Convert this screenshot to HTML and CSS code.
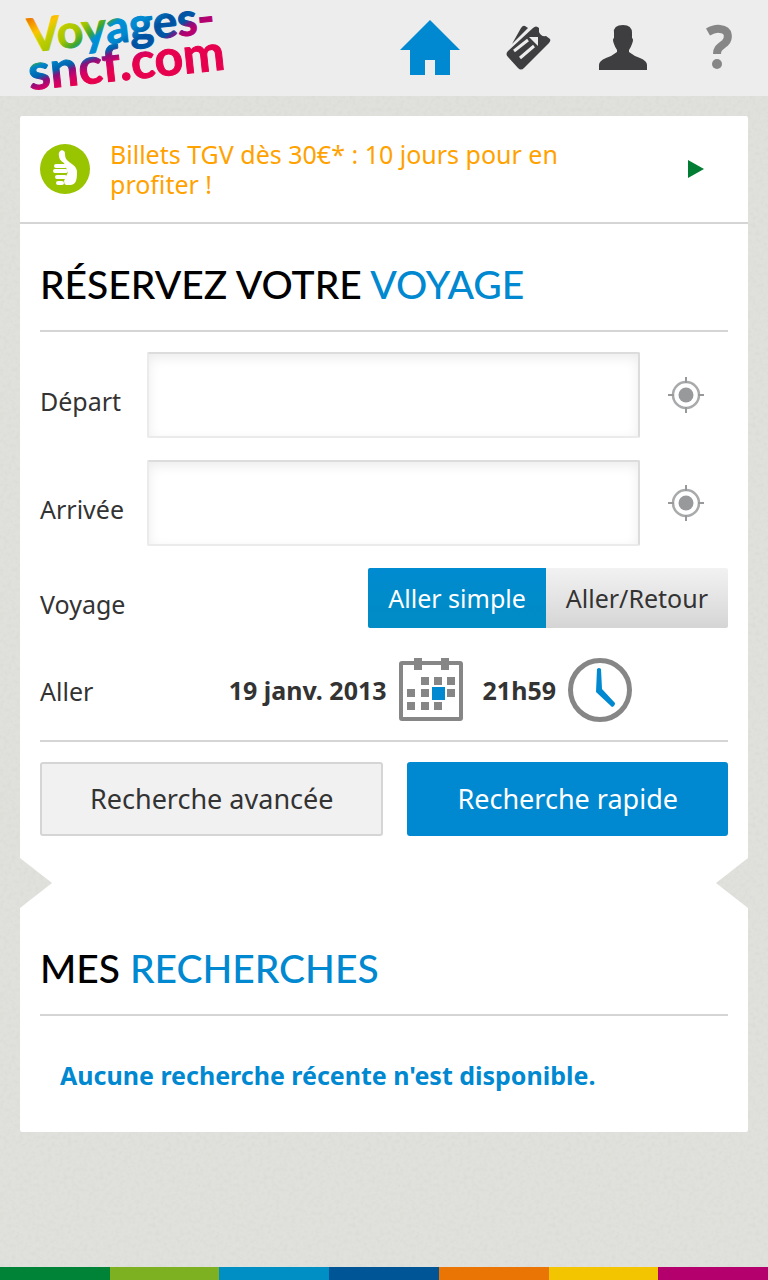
FILE: index.html
```html
<!DOCTYPE html>
<html lang="fr">
<head>
  <meta charset="UTF-8" />
  <meta name="viewport" content="width=device-width, initial-scale=1" />
  <title>Voyages-sncf.com</title>
  <link rel="stylesheet" href="styles.css">
</head>
<body>
  <header class="header">
    <a href="#" class="logo">
      <svg width="230" height="96" viewBox="0 0 230 96" role="img" aria-label="Voyages-sncf.com">
        <defs>
          <linearGradient id="top" gradientUnits="userSpaceOnUse" x1="16" y1="20" x2="79" y2="104" gradientTransform="rotate(6 18 52)">
            <stop offset="0" stop-color="#ee7d00" />
            <stop offset="0.14" stop-color="#fdc400" />
            <stop offset="0.22" stop-color="#c5cf00" />
            <stop offset="0.36" stop-color="#a2c400" />
            <stop offset="0.46" stop-color="#3aa535" />
            <stop offset="0.52" stop-color="#0090d7" />
            <stop offset="0.66" stop-color="#0088cf" />
            <stop offset="0.78" stop-color="#0051a0" />
            <stop offset="0.9" stop-color="#0056a6" />
            <stop offset="0.95" stop-color="#7a1580" />
            <stop offset="1" stop-color="#b5006e" />
          </linearGradient>
          <linearGradient id="bottom" gradientUnits="userSpaceOnUse" x1="16" y1="64" x2="29" y2="98" gradientTransform="rotate(6 18 90)">
            <stop offset="0" stop-color="#3aa935" />
            <stop offset="0.15" stop-color="#0086c8" />
            <stop offset="0.42" stop-color="#0062ae" />
            <stop offset="0.56" stop-color="#8a0f7c" />
            <stop offset="0.75" stop-color="#cf0068" />
            <stop offset="1" stop-color="#e6004e" />
          </linearGradient>
        </defs>
        <g class="logo-text">
          <text x="18" y="52" font-size="46" fill="url(#top)" stroke="url(#top)" transform="rotate(-6 18 52)">Voyages-</text>
          <text x="18" y="90" font-size="50" fill="url(#bottom)" stroke="url(#bottom)" transform="rotate(-6 18 90)">sncf.com</text>
        </g>
      </svg>
    </a>
    <nav class="nav">
      <a href="#" aria-label="Accueil">
        <svg width="60" height="56" viewBox="0 0 60 56"><path d="M30 0L60 30H50V55H35V40H25V55H10V30H0Z" fill="#0088d0" /></svg>
      </a>
      <a href="#" aria-label="Billets">
        <svg width="46" height="46" viewBox="0 0 46 46">
          <path d="M6 19L15 3Q17 0 19 1L22 3Z" fill="#3e3e40" />
          <path d="M2 26L27 3Q30 0 33 3V7Q35 12 40 11L44 14Q45 16 43 18L18 43Q15 46 12 43L2 32Q-1 29 2 26Z" fill="#3e3e40" />
          <path d="M23 12H32V21Z" fill="#ededed" />
          <path d="M8 26L22 15M14 33L28 21" stroke="#ededed" stroke-width="3" />
        </svg>
      </a>
      <a href="#" aria-label="Mon compte">
        <svg width="50" height="46" viewBox="0 0 50 46"><path d="M25 0Q34 0 34 8V13Q36 14 34 19Q33 22 31 25V27Q36 31 42 33Q49 36 49 40V45H1V40Q1 36 8 33Q14 31 19 27V25Q17 22 16 19Q14 14 16 13V8Q15 0 25 0Z" fill="#3e3e40" /></svg>
      </a>
      <a href="#" aria-label="Aide">
        <svg width="26" height="46" viewBox="0 0 26 46">
          <path d="M2 7Q9 3 14 4C24 5 23 14 19 18C14 22 11 23 11 29" fill="none" stroke="#868686" stroke-width="8" />
          <circle cx="11" cy="39" r="5" fill="#868686" />
        </svg>
      </a>
    </nav>
  </header>

  <main class="main">
    <a href="#" class="promo">
      <svg class="thumb" width="50" height="50" viewBox="0 0 50 50">
        <circle cx="25" cy="25" r="25" fill="#99c400" />
        <path d="M19 12C18 8 21 5 24 7C26 9 24 13 27 16C31 20 37 22 37 28C37 36 36 41 30 41H26Q24 40 24 37L28 28L24 19Q19 16 19 12Z" fill="#fff" />
        <path d="M16 22H25M15 27H26M17 33H25M18 39H22" stroke="#fff" stroke-width="4" stroke-linecap="round" />
      </svg>
      <span class="promo-text">Billets TGV dès 30€* : 10 jours pour en profiter !</span>
      <svg class="arrow" width="16" height="18" viewBox="0 0 16 18"><path d="M0 0L16 9L0 18Z" fill="#007d32" /></svg>
    </a>

    <form class="section booking">
      <h1 class="title">RÉSERVEZ VOTRE <span>VOYAGE</span></h1>

      <div class="row">
        <label class="label" for="from">Départ</label>
        <input class="field" type="text" id="from" />
        <button class="locate" type="button" aria-label="Me localiser au départ">
          <svg width="38" height="38" viewBox="0 0 38 38">
            <circle cx="19" cy="19" r="13" fill="none" stroke="#a8aaab" stroke-width="2.5" />
            <circle cx="19" cy="19" r="7.500" fill="#97999b" />
            <path d="M19 1V7M19 31V37M1 19H7M31 19H37" stroke="#97999b" stroke-width="2" />
          </svg>
        </button>
      </div>

      <div class="row">
        <label class="label" for="to">Arrivée</label>
        <input class="field" type="text" id="to" />
        <button class="locate" type="button" aria-label="Me localiser à l'arrivée">
          <svg width="38" height="38" viewBox="0 0 38 38">
            <circle cx="19" cy="19" r="13" fill="none" stroke="#a8aaab" stroke-width="2.5" />
            <circle cx="19" cy="19" r="7.500" fill="#97999b" />
            <path d="M19 1V7M19 31V37M1 19H7M31 19H37" stroke="#97999b" stroke-width="2" />
          </svg>
        </button>
      </div>

      <div class="row" role="radiogroup" aria-labelledby="trip">
        <span class="label" id="trip">Voyage</span>
        <div class="toggle">
          <input type="radio" name="trip" id="oneway" checked />
          <label for="oneway">Aller simple</label>
          <input type="radio" name="trip" id="return" />
          <label for="return">Aller/Retour</label>
        </div>
      </div>

      <div class="row row-date">
        <span class="label">Aller</span>
        <div class="when">
          <button class="pick" type="button">
            19 janv. 2013
            <svg width="64" height="64" viewBox="0 0 64 64">
              <rect x="2" y="5" width="60" height="56" rx="1" fill="none" stroke="#868686" stroke-width="4" />
              <path d="M15 0h8v12h-8zM42 0h8v12h-8zM22 19h8v8h-8zM35 19h8v8h-8zM48 19h8v8h-8zM8 31h8v8h-8zM22 31h8v8h-8zM48 31h8v8h-8zM8 44h8v8h-8zM22 44h8v8h-8zM35 44h8v8h-8z" fill="#868686" />
              <path d="M33 29h13v13h-13z" fill="#0088d0" />
            </svg>
          </button>
          <button class="pick" type="button">
            21h59
            <svg width="64" height="64" viewBox="0 0 64 64">
              <circle cx="32" cy="32" r="29.500" fill="none" stroke="#868686" stroke-width="5" />
              <path d="M29 11Q31 9 33 11L34 31L47 45Q47 48 44 49L28 34Z" fill="#0088d0" />
            </svg>
          </button>
        </div>
      </div>

      <div class="actions">
        <button class="btn" type="button">Recherche avancée</button>
        <button class="btn btn-primary" type="submit">Recherche rapide</button>
      </div>
    </form>

    <div class="notch"></div>

    <section class="section recent">
      <h2 class="title">MES <span>RECHERCHES</span></h2>
      <p class="empty">Aucune recherche récente n'est disponible.</p>
    </section>
  </main>

  <footer class="stripes">
    <span class="green"></span>
    <span class="lime"></span>
    <span class="sky"></span>
    <span class="navy"></span>
    <span class="orange"></span>
    <span class="yellow"></span>
    <span class="pink"></span>
  </footer>
</body>
</html>
```
FILE: styles.css
```css
* {
  box-sizing: border-box;
}

body {
  margin: 0;
  min-height: 100vh;
  display: flex;
  flex-direction: column;
  font-family: "Noto Sans", sans-serif;
  font-size: 25px;
  line-height: 30px;
  color: #333;
  background-color: #e0e1dc;
  background-image: url("data:image/svg+xml,%3Csvg xmlns='http://www.w3.org/2000/svg' width='200' height='200'%3E%3Cfilter id='n'%3E%3CfeTurbulence type='fractalNoise' baseFrequency='.25' numOctaves='2' stitchTiles='stitch'/%3E%3CfeColorMatrix values='0 0 0 0 .5 0 0 0 0 .5 0 0 0 0 .48 .3 0 0 0 -.12'/%3E%3C/filter%3E%3Crect width='200' height='200' filter='url(%23n)'/%3E%3C/svg%3E");
}

svg {
  display: block;
  flex: none;
  overflow: visible;
}

button {
  font: inherit;
  color: inherit;
  border: none;
  background: none;
  padding: 0;
  cursor: pointer;
}

.header {
  display: flex;
  justify-content: space-between;
  align-items: center;
  height: 96px;
  padding: 0 36px 0 12px;
  background-color: #ededed;
}

.logo-text {
  font-family: Lato, sans-serif;
  font-weight: 700;
  stroke-width: 1px;
}

.nav {
  display: flex;
  align-items: center;
  gap: 46px;
}

.nav a:nth-child(3) {
  margin-right: 12px;
}

.main {
  margin: 20px;
}

.promo {
  display: flex;
  align-items: center;
  gap: 20px;
  min-height: 108px;
  padding: 0 44px 0 20px;
  background-color: #fff;
  border-bottom: 2px solid #d5d5d5;
  border-radius: 2px 2px 0 0;
  color: #ffa200;
  text-decoration: none;
}

.promo-text {
  flex: 1;
  max-width: 480px;
}

.arrow {
  margin-left: auto;
}

.section {
  padding: 30px 20px 22px;
  background-color: #fff;
}

.title {
  margin: 0 0 20px;
  padding-bottom: 16px;
  border-bottom: 2px solid #d5d5d5;
  font-family: Lato, sans-serif;
  font-size: 39px;
  font-weight: 500;
  line-height: 60px;
  color: #000;
}

.title span {
  color: #0088d0;
}

.row {
  display: flex;
  align-items: center;
  margin-bottom: 22px;
}

.label {
  width: 107px;
  padding-top: 12px;
}

.field {
  flex: 1;
  min-width: 0;
  height: 86px;
  padding: 0 20px;
  border: 2px solid #ebebeb;
  border-top-color: #dcdcdc;
  border-right-color: #dcdcdc;
  border-radius: 2px;
  font: inherit;
  box-shadow: inset 0 4px 12px rgba(0, 0, 0, 0.08);
}

.locate {
  width: 88px;
  padding-left: 27px;
}

.toggle {
  display: flex;
  margin-left: auto;
  border-radius: 2px;
  overflow: hidden;
}

.toggle input {
  appearance: none;
  width: 0;
  margin: 0;
}

.toggle label {
  padding: 15px 20px;
  background: linear-gradient(#f2f2f2, #d5d5d5);
  cursor: pointer;
}

.toggle input:checked + label {
  background: linear-gradient(#008ad0, #008cc4);
  color: #fff;
}

.row-date {
  margin: 30px 0 18px;
  padding-right: 96px;
}

.row-date .label {
  padding-top: 2px;
}

.when {
  display: flex;
  gap: 20px;
  margin-left: auto;
}

.pick {
  display: flex;
  align-items: center;
  gap: 12px;
  font-weight: 700;
}

.actions {
  display: flex;
  gap: 24px;
  padding-top: 20px;
  border-top: 2px solid #d5d5d5;
}

.btn {
  flex: 1 1 auto;
  height: 74px;
  background-color: #f1f1f1;
  border: 2px solid #d5d5d5;
  border-radius: 3px;
  font-size: 27px;
}

.btn-primary {
  background-color: #0088d0;
  border-color: #0088d0;
  color: #fff;
}

/* side arrows cut into the white card */
.notch {
  height: 50px;
  background-color: #fff;
  clip-path: polygon(0 0, 100% 0, calc(100% - 32px) 50%, 100% 100%, 0 100%, 32px 50%);
}

.recent {
  border-radius: 0 0 2px 2px;
}

.empty {
  margin: 0;
  padding: 24px 20px 20px;
  font-weight: 700;
  color: #0088d0;
}

.stripes {
  display: flex;
  height: 13px;
  margin-top: auto;
}

.stripes span {
  flex: 1;
}

.green { background-color: #008336; }
.lime { background-color: #7db122; }
.sky { background-color: #008fc5; }
.navy { background-color: #005596; }
.orange { background-color: #ea7404; }
.yellow { background-color: #f3c500; }
.pink { background-color: #b4006c; }
```
